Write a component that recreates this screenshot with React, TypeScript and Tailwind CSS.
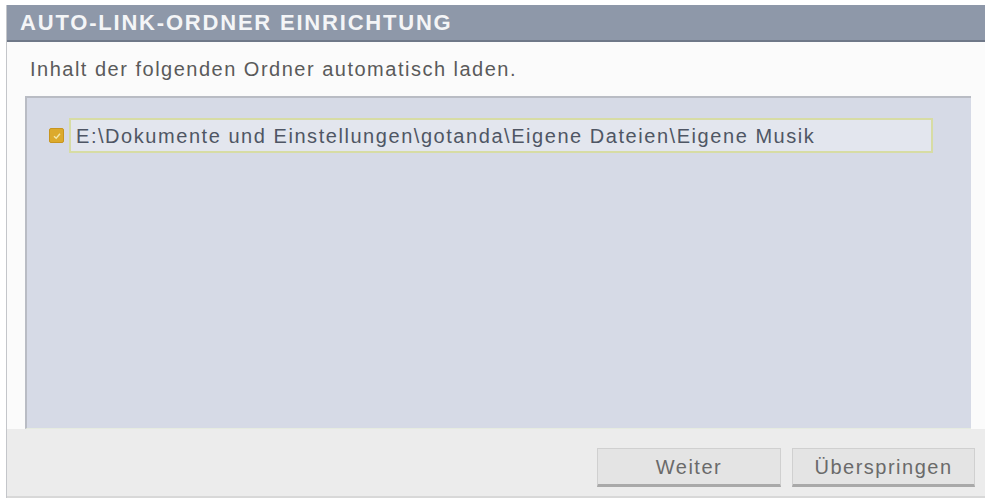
export default function App() {
  return (
    <div className="w-[990px] h-[498px] bg-white pl-[6px] pt-[5px] overflow-hidden" style={{ fontFamily: '"Liberation Sans", Arial, sans-serif' }}>
      <div className="h-full flex flex-col border-l border-[#c4c6ca] pr-[5px]">
        <div className="h-[37px] shrink-0 bg-[#8e98a9] border-b-2 border-[#6f7888] flex items-center pl-[13px]">
          <h1 className="text-[22px] font-bold text-[#f4f5f7] tracking-[1.8px] leading-none">AUTO-LINK-ORDNER EINRICHTUNG</h1>
        </div>
        <div className="flex-1 flex flex-col bg-[#fbfbfb]">
          <p className="h-[54px] shrink-0 flex items-center pl-[23px] text-[20px] text-[#5a5a5a] tracking-[1.5px]">
            Inhalt der folgenden Ordner automatisch laden.
          </p>
          <div className="ml-[18px] mr-[14px] h-[333px] shrink-0 bg-[#d6dae6] border-t-2 border-l-2 border-[#b9bcc4] border-b border-b-[#e6ebe0] pt-[20px] pl-[22px] pr-[38px]">
            <div className="flex items-center gap-[5px]">
              <span className="w-[15px] h-[15px] shrink-0 rounded-[2px] bg-[#dcaa2c] border border-[#c8951f] flex items-center justify-center">
                <svg viewBox="0 0 10 10" className="w-[10px] h-[10px]">
                  <path d="M2 5.2 L4.2 7.3 L8 2.8" fill="none" stroke="#f3e7a8" strokeWidth="1.4" />
                </svg>
              </span>
              <div className="flex-1 h-[35px] flex items-center border-2 border-[#d7dca4] bg-[#e3e6ee] pl-[5px] text-[20px] text-[#4f5664] tracking-[1.55px] whitespace-nowrap">
                E:\Dokumente und Einstellungen\gotanda\Eigene Dateien\Eigene Musik
              </div>
            </div>
          </div>
          <div className="flex-1 bg-[#ececec] border-b-2 border-[#d8d8d8] flex justify-end items-start pt-[19px] pr-[10px] gap-[11px]">
            <button className="w-[184px] h-[39px] bg-[#e4e4e4] border border-[#d0d0d0] border-b-[3px] border-b-[#a9a9a9] text-[20px] text-[#6a6a6a] tracking-[1.5px]">
              Weiter
            </button>
            <button className="w-[183px] h-[39px] bg-[#e4e4e4] border border-[#d0d0d0] border-b-[3px] border-b-[#a9a9a9] text-[20px] text-[#6a6a6a] tracking-[1.5px]">
              Überspringen
            </button>
          </div>
        </div>
      </div>
    </div>
  );
}
